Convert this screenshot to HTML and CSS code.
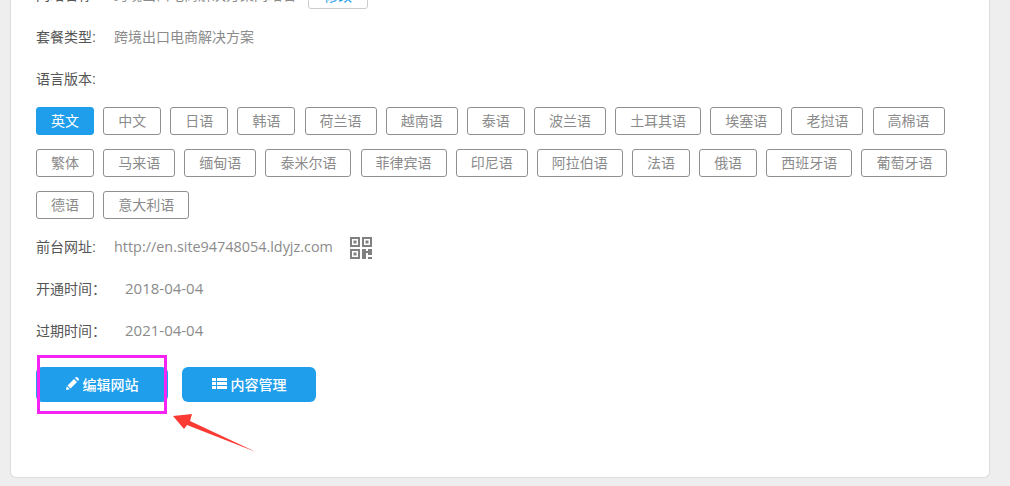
FILE: index.html
```html
<!DOCTYPE html>
<html lang="zh-CN">
<head>
<meta charset="utf-8">
<title>网站详情</title>
<link rel="stylesheet" href="styles.css">
</head>
<body>
<main class="card">
  <div class="row row-top">
    <span class="label">网站名称:</span>
    <span class="value">跨境出口电商解决方案网站名</span>
    <button class="edit-btn">修改</button>
  </div>
  <div class="row"><span class="label">套餐类型:</span><span class="value">跨境出口电商解决方案</span></div>
  <div class="row"><span class="label">语言版本:</span></div>
  <div class="langs">
    <a class="lang active">英文</a><a class="lang">中文</a><a class="lang">日语</a><a class="lang">韩语</a><a class="lang">荷兰语</a><a class="lang">越南语</a><a class="lang">泰语</a><a class="lang">波兰语</a><a class="lang">土耳其语</a><a class="lang">埃塞语</a><a class="lang">老挝语</a><a class="lang">高棉语</a>
    <a class="lang">繁体</a><a class="lang">马来语</a><a class="lang">缅甸语</a><a class="lang">泰米尔语</a><a class="lang">菲律宾语</a><a class="lang">印尼语</a><a class="lang">阿拉伯语</a><a class="lang">法语</a><a class="lang">俄语</a><a class="lang">西班牙语</a><a class="lang">葡萄牙语</a>
    <a class="lang">德语</a><a class="lang">意大利语</a>
  </div>
  <div class="row">
    <span class="label">前台网址:</span><span class="value url">http://en.site94748054.ldyjz.com</span>
    <svg class="qr" viewBox="0 0 22 22" width="22" height="22" aria-hidden="true">
      <path fill="#808080" fill-rule="evenodd" d="M0 0h10v10H0zM2 2v6h6V2zM3.500 3.500h3v3h-3zM12 0h10v10H12zM14 2v6h6V2zM15.500 3.500h3v3h-3zM0 12h10v10H0zM2 14v6h6v-6zM3.500 15.500h3v3h-3zM12 12h4v2h2v-2h4v6h-4v-2h-2v6h-4zM18 20h2v2h-2zM20 20h2v2h-2z"/>
    </svg>
  </div>
  <div class="row"><span class="label date-label">开通时间：</span><span class="value date">2018-04-04</span></div>
  <div class="row"><span class="label date-label">过期时间：</span><span class="value date">2021-04-04</span></div>
  <div class="actions">
    <button class="action edit">
      <svg class="ico" viewBox="0 0 13 13" width="13" height="13" aria-hidden="true"><path fill="#fff" d="M0 13l.8-3.800L3.800 12.200zM1.500 8.500L8 2l3 3-6.500 6.500zM9 1l.8-.7c.4-.4 1-.4 1.400 0l1.500 1.500c.4.400.4 1 0 1.400L12 4z"/></svg>
      编辑网站
    </button>
    <button class="action manage">
      <svg class="ico" viewBox="0 0 15 11" width="15" height="11" aria-hidden="true"><path fill="#fff" d="M0 0h4v3H0zM5 0h10v3H5zM0 4h4v3H0zM5 4h10v3H5zM0 8h4v3H0zM5 8h10v3H5z"/></svg>
      内容管理
    </button>
  </div>
  <div class="highlight"></div>
  <svg class="arrow" viewBox="0 0 84 38" width="84" height="38" aria-hidden="true"><path fill="#fb3a33" d="M0 2L19 0 17 7 83 38 14 11 11 15z"/></svg>
</main>
</body>
</html>
```

FILE: styles.css
```css
* { box-sizing: border-box; }
html, body { margin: 0; height: 486px; overflow: hidden; }
body {
  background: #eeeeee;
  font-family: "Liberation Sans", "Noto Sans CJK SC", sans-serif;
  font-size: 14px;
  color: #666;
  padding: 0 20px 0 10px;
}
.card {
  position: relative;
  height: 478px;
  background: #fff;
  border: 1px solid #ddd;
  border-top: 0;
  border-radius: 0 0 6px 6px;
  padding: 0 25px;
  overflow: hidden;
}
.row { display: flex; align-items: center; height: 42px; padding-bottom: 2px; }
.row-top { margin-top: -26px; }
.label { color: #555; width: 78px; flex: none; }
.date-label { width: 89px; }
.value { color: #8b8b8b; }
.date { font-family: "Open Sans", "Noto Sans CJK SC", sans-serif; font-size: 15px; }
.url { font-family: "Open Sans", "Noto Sans CJK SC", sans-serif; font-size: 14.4px; }
.edit-btn {
  width: 60px; height: 28px; margin-left: 12px; margin-top: 2px;
  background: #fff; border: 1px solid #ccc; border-radius: 3px;
  color: #1f9eeb; font: inherit;
}
.langs { display: flex; flex-wrap: wrap; gap: 14px 9.15px; width: 930px; margin-top: 7px; margin-bottom: 7px; }
.lang {
  display: block; height: 28px; line-height: 26px; padding: 0 14px;
  border: 1px solid #8f8f8f; border-radius: 3px; color: #8b8b8b;
}
.lang.active { background: #1f9eeb; border-color: #1f9eeb; color: #fff; }
.qr { margin-left: 17px; margin-top: 4px; }
.actions { display: flex; gap: 14px; margin-top: 15px; }
.action {
  display: flex; align-items: center; justify-content: center; gap: 4px;
  height: 35px; border: 0; border-radius: 6px; padding-bottom: 3px;
  background: #1f9eeb; color: #fff; font: inherit; font-weight: 500; font-size: 14px;
}
.edit { width: 132px; }
.manage { width: 134px; }
.highlight {
  position: absolute; left: 26px; top: 355px; width: 130px; height: 59px;
  border: 3px solid #f524f5;
}
.arrow { position: absolute; left: 162px; top: 414px; }
```
